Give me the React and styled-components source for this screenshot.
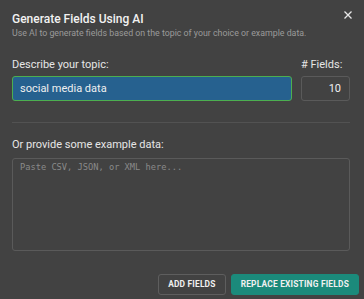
import React from "react";
import styled, { createGlobalStyle } from "styled-components";

const Global = createGlobalStyle`
  html, body { margin: 0; padding: 0; background: #424242; }
  body { font-family: Roboto, "Noto Sans", sans-serif; }
  * { box-sizing: border-box; }
`;

const Dialog = styled.div`
  width: 364px;
  height: 299px;
  background: #424242;
  display: flex;
  flex-direction: column;
  padding: 12px 5px 0 12px;
  color: #fff;
`;

const Header = styled.div`
  display: flex;
  justify-content: space-between;
  align-items: flex-start;
  padding-right: 7px;
`;

const TitleBlock = styled.div`
  display: flex;
  flex-direction: column;
`;

const Title = styled.h2`
  margin: 0;
  font-size: 12px;
  line-height: 14px;
  font-weight: 500;
  color: #f2f2f2;
`;

const Subtitle = styled.p`
  margin: 1.5px 0 0;
  font-size: 8.8px;
  line-height: 11px;
  color: #9a9a9a;
`;

const Close = styled.button`
  border: 0;
  background: none;
  padding: 0;
  margin-top: -1px;
  width: 8px;
  height: 8px;
  display: flex;
  align-items: center;
  justify-content: center;
  cursor: pointer;
`;

const Body = styled.div`
  padding-right: 9px;
  display: flex;
  flex-direction: column;
`;

const TopicRow = styled.div`
  display: flex;
  gap: 9px;
  margin-top: 19px;
`;

const Field = styled.div`
  display: flex;
  flex-direction: column;
  flex: ${(p) => (p.$grow ? 1 : "none")};
  width: ${(p) => p.$width || "auto"};
  margin-top: ${(p) => p.$top || "0"};
`;

const Label = styled.label`
  font-size: 11px;
  line-height: 13px;
  color: #e6e6e6;
  margin-bottom: ${(p) => p.$gap || "5px"};
`;

const TextInput = styled.input`
  height: 25px;
  border-radius: 3px;
  border: 1.5px solid ${(p) => (p.$focused ? "#4caf50" : "#5a5a5a")};
  background: ${(p) => (p.$focused ? "#26618f" : "transparent")};
  color: #f0f0f0;
  font-family: Roboto, sans-serif;
  font-size: 11px;
  padding: 0 ${(p) => (p.$align === "right" ? "8px" : "7px")};
  text-align: ${(p) => p.$align || "left"};
  outline: none;
`;

const Divider = styled.hr`
  margin: 21px 0 0;
  border: 0;
  border-top: 1px solid #525252;
`;

const TextArea = styled.textarea`
  height: 93px;
  resize: none;
  border-radius: 3px;
  border: 1px solid #5a5a5a;
  background: transparent;
  color: #eee;
  font-family: "DejaVu Sans Mono", "Liberation Mono", monospace;
  font-size: 8.7px;
  line-height: 11px;
  padding: 3px 7px;
  outline: none;
  &::placeholder { color: #8a8a8a; }
`;

const Footer = styled.div`
  display: flex;
  justify-content: flex-end;
  gap: 5px;
  margin-top: 23px;
`;

const Button = styled.button`
  height: 21px;
  padding: 0 9px;
  border-radius: 3px;
  border: 1px solid ${(p) => (p.$primary ? "#1b8a7b" : "#5e5e5e")};
  background: ${(p) => (p.$primary ? "#1b8a7b" : "transparent")};
  color: #f0f0f0;
  font-family: Roboto, sans-serif;
  font-weight: 700;
  font-size: 8.4px;
  letter-spacing: 0.2px;
  text-transform: uppercase;
  cursor: pointer;
`;

export default function App() {
  return (
    <>
      <Global />
      <Dialog>
        <Header>
          <TitleBlock>
            <Title>Generate Fields Using AI</Title>
            <Subtitle>Use AI to generate fields based on the topic of your choice or example data.</Subtitle>
          </TitleBlock>
          <Close aria-label="close">
            <svg width="8" height="8" viewBox="0 0 8 8">
              <path d="M0.5 0.5 L7.5 7.5 M7.5 0.5 L0.5 7.5" stroke="#e8e8e8" strokeWidth="1.3" />
            </svg>
          </Close>
        </Header>
        <Body>
          <TopicRow>
            <Field $grow>
              <Label>Describe your topic:</Label>
              <TextInput $focused defaultValue="social media data" />
            </Field>
            <Field $width="49px">
              <Label># Fields:</Label>
              <TextInput $align="right" defaultValue="10" />
            </Field>
          </TopicRow>
          <Divider />
          <Field $top="15px">
            <Label $gap="7px">Or provide some example data:</Label>
            <TextArea placeholder="Paste CSV, JSON, or XML here..." />
          </Field>
        </Body>
        <Footer>
          <Button>Add Fields</Button>
          <Button $primary>Replace Existing Fields</Button>
        </Footer>
      </Dialog>
    </>
  );
}
